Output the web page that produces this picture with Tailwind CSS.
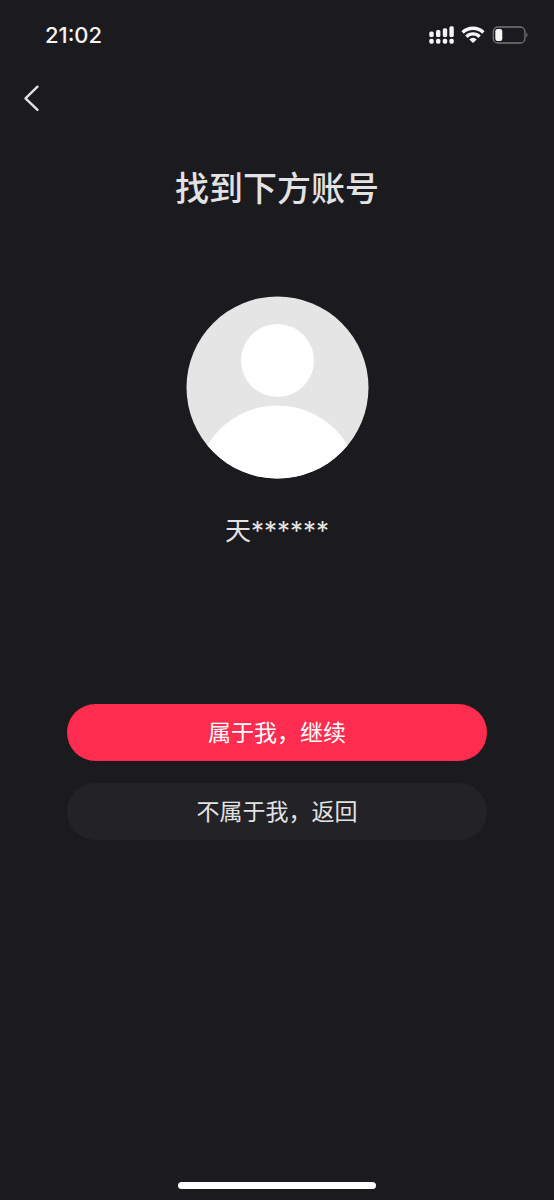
<!DOCTYPE html>
<html lang="zh-CN">
<head>
<meta charset="utf-8">
<meta name="viewport" content="width=device-width, initial-scale=1">
<title>找到下方账号</title>
<script src="https://cdn.jsdelivr.net/npm/@tailwindcss/browser@4"></script>
</head>
<body class="flex min-h-screen flex-col bg-[#1b1a1f] font-['Inter','Noto_Sans_CJK_SC',sans-serif] text-[#e2e2e3]">
  <header class="flex h-[70px] items-center justify-between pr-[26px] pl-[45px]">
    <time class="text-[22px] leading-7 font-medium text-[#f4f4f5]">21:02</time>
    <svg class="h-5 w-[100px]" viewBox="0 0 100 20" fill="#f6f6f7" role="img" aria-label="信号、无线网络、电量">
      <rect x="1.3" y="6.6" width="4.4" height="5.4" rx="1.5"/>
      <rect x="8" y="5" width="4.4" height="7" rx="1.5"/>
      <rect x="14.8" y="3.3" width="4.4" height="8.7" rx="1.5"/>
      <rect x="21.4" y="1.2" width="4.4" height="10.8" rx="1.5"/>
      <rect x="1.3" y="13.7" width="4.4" height="5" rx="1.7"/>
      <rect x="8" y="13.7" width="4.4" height="5" rx="1.7"/>
      <rect x="14.8" y="13.7" width="4.4" height="5" rx="1.7"/>
      <rect x="21.4" y="13.7" width="4.4" height="5" rx="1.7"/>
      <g fill="none" stroke="#f6f6f7" stroke-width="3.4">
        <path d="M34.6 7.4a15 15 0 0 1 20.8 0"/>
        <path d="M38.4 11.7a9.2 9.2 0 0 1 13.2 0"/>
      </g>
      <path d="M45 18 41.3 14.4a5.2 5.2 0 0 1 7.4 0z"/>
      <rect x="65.3" y="2" width="31.6" height="16" rx="4.6" fill="none" stroke="#77767a" stroke-width="1.3"/>
      <rect x="67.3" y="4" width="7" height="12" rx="2.2"/>
      <path d="M98.3 7.6c1.7.8 1.7 4 0 4.8z" fill="#77767a"/>
    </svg>
  </header>
  <nav class="flex h-14 items-center pl-4">
    <button type="button" aria-label="返回上一页" class="flex size-8 items-center justify-center">
      <svg class="size-8" viewBox="0 0 32 32" fill="none" stroke="#e2e2e3" stroke-width="2.4" stroke-linecap="round" stroke-linejoin="round"><path d="M21.5 4.7 9.5 16.3l12 11.5"/></svg>
    </button>
  </nav>
  <main class="flex grow flex-col items-center px-[67px] pt-9">
    <h1 class="text-[34px] leading-[54px] font-medium">找到下方账号</h1>
    <svg class="mt-20 size-[183px]" viewBox="0 0 183 183" role="img" aria-label="头像">
      <clipPath id="round"><circle cx="91.5" cy="91.5" r="91"/></clipPath>
      <g clip-path="url(#round)">
        <path fill="#e5e5e5" d="M0 0h183v183H0z"/>
        <circle cx="91.5" cy="64.5" r="36.5" fill="#fff"/>
        <circle cx="91.5" cy="191" r="81.5" fill="#fff"/>
      </g>
    </svg>
    <p class="mt-8 text-[26px] leading-10">天******</p>
    <div class="mt-[153px] flex w-full flex-col gap-[22px] text-[23px] leading-8">
      <button type="button" class="h-[57px] rounded-full bg-[#fe2c4e] text-white">属于我，继续</button>
      <button type="button" class="h-[57px] rounded-full bg-[#232227]">不属于我，返回</button>
    </div>
  </main>
  <footer class="flex justify-center pb-[11px]">
    <div class="h-[7px] w-[198px] rounded-full bg-white"></div>
  </footer>
</body>
</html>
